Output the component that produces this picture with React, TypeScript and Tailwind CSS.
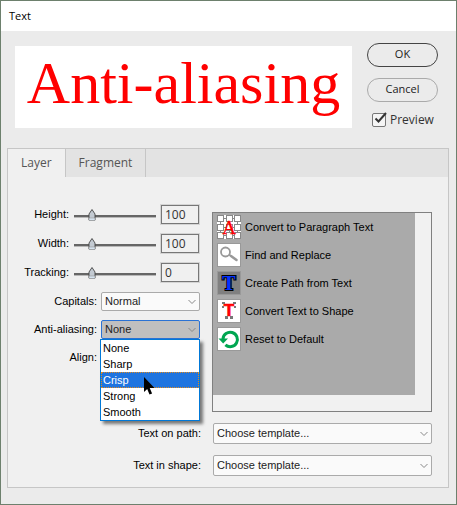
import { useState } from "react";

// ── Constants ──────────────────────────────────────────────────────────────
const TABS = ["Layer", "Fragment"];

const SLIDERS = [
  { id: "height", label: "Height:", value: 100 },
  { id: "width", label: "Width:", value: 100 },
  { id: "tracking", label: "Tracking:", value: 0 },
];

const SMOOTHING = ["None", "Sharp", "Crisp", "Strong", "Smooth"];

const COMMANDS = [
  { icon: "paragraph", label: "Convert to Paragraph Text" },
  { icon: "find", label: "Find and Replace" },
  { icon: "path", label: "Create Path from Text" },
  { icon: "shape", label: "Convert Text to Shape" },
  { icon: "reset", label: "Reset to Default" },
];

const TEMPLATES = [
  { id: "on-path", label: "Text on path:" },
  { id: "in-shape", label: "Text in shape:" },
];

// ── Icons ──────────────────────────────────────────────────────────────────
function CommandIcon({ type }: { type: string }) {
  const cls = "block size-6 shrink-0";
  if (type === "paragraph")
    return (
      <svg viewBox="0 0 24 24" className={cls} shapeRendering="crispEdges">
        <rect width="24" height="24" fill="#fff" />
        <path
          d="M6 3.5h3M15 3.5h3M6 12.5h3M15 12.5h3M6 20.5h3M15 20.5h3M3.5 6v3M3.5 15v3M12.5 6v3M12.5 15v3M20.5 6v3M20.5 15v3"
          stroke="#888"
          fill="none"
        />
        {[0, 9, 17].map((y) =>
          [0, 9, 17].map((x) => (
            <rect key={`${x}-${y}`} x={x + 0.5} y={y + 0.5} width="6" height="6" fill="#fff" stroke="#888" />
          ))
        )}
        <text
          x="12"
          y="18.5"
          textAnchor="middle"
          fontSize="19"
          fill="#f00"
          stroke="#f00"
          strokeWidth="0.3"
          fontFamily="Liberation Serif, serif"
        >
          A
        </text>
      </svg>
    );
  if (type === "find")
    return (
      <svg viewBox="0 0 24 24" className={cls}>
        <rect x="0.5" y="0.5" width="23" height="23" fill="#fff" stroke="#999" />
        <circle cx="8.5" cy="9" r="4.5" fill="none" stroke="#999" strokeWidth="1.8" />
        <path d="M12 11.5l2 1.5" stroke="#999" strokeWidth="1.6" />
        <path d="M14 13l5.5 4" stroke="#999" strokeWidth="2.6" strokeLinecap="round" />
      </svg>
    );
  if (type === "path")
    return (
      <svg viewBox="0 0 24 24" className={cls}>
        <rect x="0.5" y="0.5" width="23" height="23" fill="#808080" stroke="#999" />
        <text
          x="12"
          y="18.5"
          textAnchor="middle"
          fontSize="18"
          fontWeight="bold"
          fill="#0433ff"
          stroke="#000"
          strokeWidth="2"
          paintOrder="stroke"
          fontFamily="DejaVu Serif, serif"
        >
          T
        </text>
      </svg>
    );
  if (type === "shape")
    return (
      <svg viewBox="0 0 24 24" className={cls}>
        <rect x="0.5" y="0.5" width="23" height="23" fill="#fff" stroke="#999" />
        <text
          x="12"
          y="17"
          textAnchor="middle"
          fontSize="17"
          fontWeight="bold"
          fill="#f00"
          stroke="#f00"
          strokeWidth="0.6"
          fontFamily="Liberation Sans, sans-serif"
        >
          T
        </text>
        <path d="M5 3h3v2H5zM16 3h3v2h-3zM5 7h2v2H5zM17 7h2v2h-2zM8 17h3v3H8zM13 17h3v3h-3z" fill="#777" />
      </svg>
    );
  return (
    <svg viewBox="0 0 24 24" className={cls}>
      <rect x="0.5" y="0.5" width="23" height="23" fill="#fff" stroke="#999" />
      <path d="M6 12a7.2 7.2 0 1 1 2.4 5.8" fill="none" stroke="#00a651" strokeWidth="3" />
      <path d="M1.5 11.5h9.5l-4.8 5z" fill="#00a651" />
    </svg>
  );
}

function Chevron() {
  return (
    <svg
      viewBox="0 0 8 5"
      className="pointer-events-none absolute top-1/2 right-1 h-[5px] w-2 -translate-y-1/2"
      fill="none"
      stroke="#888"
    >
      <path d="M0.5 0.5L4 4l3.5-3.5" />
    </svg>
  );
}

function Pointer() {
  return (
    <svg viewBox="0 0 12 18" className="pointer-events-none absolute top-[37px] left-[42px] h-[18px] w-3">
      <path d="M1 0v15l3.2-3 2.3 5.5 2.6-1-2.4-5.5H11.5z" fill="#000" />
    </svg>
  );
}

// ── Controls ───────────────────────────────────────────────────────────────
function SliderRow({ id, label, value }: { id: string; label: string; value: number }) {
  const [amount, setAmount] = useState(value);
  const [pos, setPos] = useState(17);

  return (
    <div className="flex h-[19px] items-center">
      <label htmlFor={id} className="w-[61px] shrink-0 pb-[2px] text-right">
        {label}
      </label>
      <div className="relative ml-[5px] h-3 flex-1">
        <div className="absolute inset-x-0 top-1/2 h-[3px] border-t-2 border-[#666] bg-[#b8b8b8]" />
        <svg
          viewBox="0 0 8 12"
          className="absolute top-0 h-3 w-2"
          style={{ left: `${pos}%` }}
        >
          <path d="M4 0.5L1 5v6h6V5z" fill="#c3cad2" stroke="#444" strokeWidth="0.9" />
          <path d="M1 9h6v2.5H1z" fill="#d5e2ee" stroke="#888" strokeWidth="0.5" />
        </svg>
        <input
          id={id}
          type="range"
          value={pos}
          onChange={(e) => setPos(Number(e.target.value))}
          className="absolute inset-0 m-0 h-full w-full opacity-0"
        />
      </div>
      <input
        aria-label={`${id} value`}
        value={amount}
        onChange={(e) => setAmount(Number(e.target.value))}
        className="ml-[5px] h-[19px] w-[38px] border border-[#777] bg-[#f0f0f0] pl-[3px] font-['Open_Sans',sans-serif] text-[12px] leading-[17px] text-[#333] outline outline-[#d4d4d4]"
      />
    </div>
  );
}

// ── Main Component ─────────────────────────────────────────────────────────
export default function App() {
  const [tab, setTab] = useState("Layer");
  const [smoothing, setSmoothing] = useState("None");
  const [hovered, setHovered] = useState("Crisp");

  return (
    <main className="flex min-h-screen flex-col border border-[#6d806d] bg-[#ebebeb] font-['Liberation_Sans',Arial,sans-serif] text-[11px] leading-4 text-black">
      {/* Title bar */}
      <header className="flex h-[30px] items-center bg-white px-2">
        <h1 className="font-['Open_Sans',sans-serif] text-[11px]">Text</h1>
      </header>

      {/* Preview and actions */}
      <div className="flex gap-[15px] pt-3 pr-[18px] pl-[14px] font-['Open_Sans',sans-serif] text-[12px] text-[#333]">
        <div className="mt-[3px] flex h-[82px] flex-1 items-center justify-center bg-white pb-2">
          <p className="font-['Liberation_Serif',serif] text-[60px] leading-none whitespace-nowrap text-[#f00]">
            Anti-aliasing
          </p>
        </div>
        <div className="flex w-[71px] flex-col">
          <button type="button" className="h-6 rounded-full border border-[#444] pb-[2px] text-[11px] leading-5 text-[#222]">
            OK
          </button>
          <button
            type="button"
            className="mt-[11px] h-6 rounded-full border border-[#aaa] pb-[2px] text-[11px] leading-5 text-[#222]"
          >
            Cancel
          </button>
          <label className="relative mt-[10px] flex items-center gap-1 pl-[5px]">
            <input
              type="checkbox"
              defaultChecked
              className="peer size-[14px] shrink-0 appearance-none rounded-[2px] border border-[#777] bg-[#f5f5f5]"
            />
            <svg
              viewBox="0 0 14 14"
              className="pointer-events-none invisible absolute top-0 left-[6px] size-[14px] peer-checked:visible"
              fill="none"
              stroke="#333"
              strokeWidth="2"
            >
              <path d="M2.5 6.5L5.5 9.5L13 1" />
            </svg>
            Preview
          </label>
        </div>
      </div>

      {/* Tabbed panel */}
      <section className="mt-5 mr-[7px] mb-4 ml-[6px] flex-1 border border-[#c6c6c6] bg-[#f0f0f0]">
        <div role="tablist" className="flex h-7 bg-[#e3e3e3] font-['Open_Sans',sans-serif] text-[12px] text-[#555]">
          {TABS.map((t) => (
            <button
              key={t}
              type="button"
              role="tab"
              aria-selected={t === tab}
              onClick={() => setTab(t)}
              className={`border-r border-[#c6c6c6] px-[13px] ${t === tab ? "bg-[#f0f0f0]" : ""}`}
            >
              {t}
            </button>
          ))}
        </div>

        <div className="flex gap-3 pt-7 pr-4">
          {/* Character settings */}
          <div className="w-[192px] shrink-0">
            <div className="flex flex-col gap-[10px] pr-px">
              {SLIDERS.map((s) => (
                <SliderRow key={s.id} {...s} />
              ))}
            </div>

            <div className="mt-[10px] flex flex-col gap-[9px]">
              <div className="flex h-[19px] items-center gap-1">
                <label htmlFor="capitals" className="w-[89px] pb-[2px] text-right">
                  Capitals:
                </label>
                <div className="relative flex-1">
                  <select
                    id="capitals"
                    className="block h-[19px] w-full appearance-none rounded-[2px] border border-[#aaa] bg-[#fafafa] pb-[2px] pl-[3px] text-[#222]"
                  >
                    <option>Normal</option>
                  </select>
                  <Chevron />
                </div>
              </div>

              <div className="flex h-[19px] items-center gap-1">
                <label htmlFor="smoothing" className="w-[89px] pb-[2px] text-right">
                  Anti-aliasing:
                </label>
                <div className="relative flex-1">
                  <select
                    id="smoothing"
                    value={smoothing}
                    onChange={(e) => setSmoothing(e.target.value)}
                    className="block h-[19px] w-full appearance-none rounded-[2px] border border-[#2a72d4] bg-[#bfbfbf] pb-[2px] pl-[3px] text-[#222]"
                  >
                    {SMOOTHING.map((s) => (
                      <option key={s}>{s}</option>
                    ))}
                  </select>
                  <Chevron />
                  <ul
                    role="listbox"
                    aria-label="Anti-aliasing"
                    className="absolute top-full right-0 -left-px z-10 border border-[#0078d7] bg-white shadow-[3px_3px_3px_rgba(0,0,0,0.5)]"
                  >
                    {SMOOTHING.map((s) => (
                      <li
                        key={s}
                        role="option"
                        aria-selected={s === smoothing}
                        onMouseEnter={() => setHovered(s)}
                        onClick={() => setSmoothing(s)}
                        className={
                          s === hovered
                            ? "border border-dotted border-[#e08a20] bg-[#1e74e0] px-px leading-[14px] text-white"
                            : "px-[2px] leading-4"
                        }
                      >
                        {s}
                      </li>
                    ))}
                    <Pointer />
                  </ul>
                </div>
              </div>

              <p className="flex h-[19px] w-[89px] items-center justify-end pb-[2px]">Align:</p>
            </div>
          </div>

          {/* Commands */}
          <div className="mt-[7px] h-[200px] min-w-0 flex-1 border border-[#808080] bg-[#f1f1f1] pr-4 pb-4">
            <ul className="flex h-full flex-col gap-1 bg-[#aaa] pt-[2px] pl-1">
              {COMMANDS.map((c) => (
                <li key={c.label}>
                  <button type="button" className="flex items-center gap-1">
                    <CommandIcon type={c.icon} />
                    {c.label}
                  </button>
                </li>
              ))}
            </ul>
          </div>
        </div>

        {/* Templates */}
        <div className="mt-[11px] flex flex-col gap-[11px] pr-4">
          {TEMPLATES.map((t) => (
            <div key={t.id} className="flex items-center gap-3">
              <label htmlFor={t.id} className="w-[193px] shrink-0 pb-[2px] text-right">
                {t.label}
              </label>
              <div className="relative flex-1">
                <select
                  id={t.id}
                  className="block h-[21px] w-full appearance-none rounded-[2px] border border-[#aaa] bg-[#fafafa] pb-[2px] pl-[3px] text-[#222]"
                >
                  <option>Choose template...</option>
                </select>
                <Chevron />
              </div>
            </div>
          ))}
        </div>
      </section>
    </main>
  );
}
